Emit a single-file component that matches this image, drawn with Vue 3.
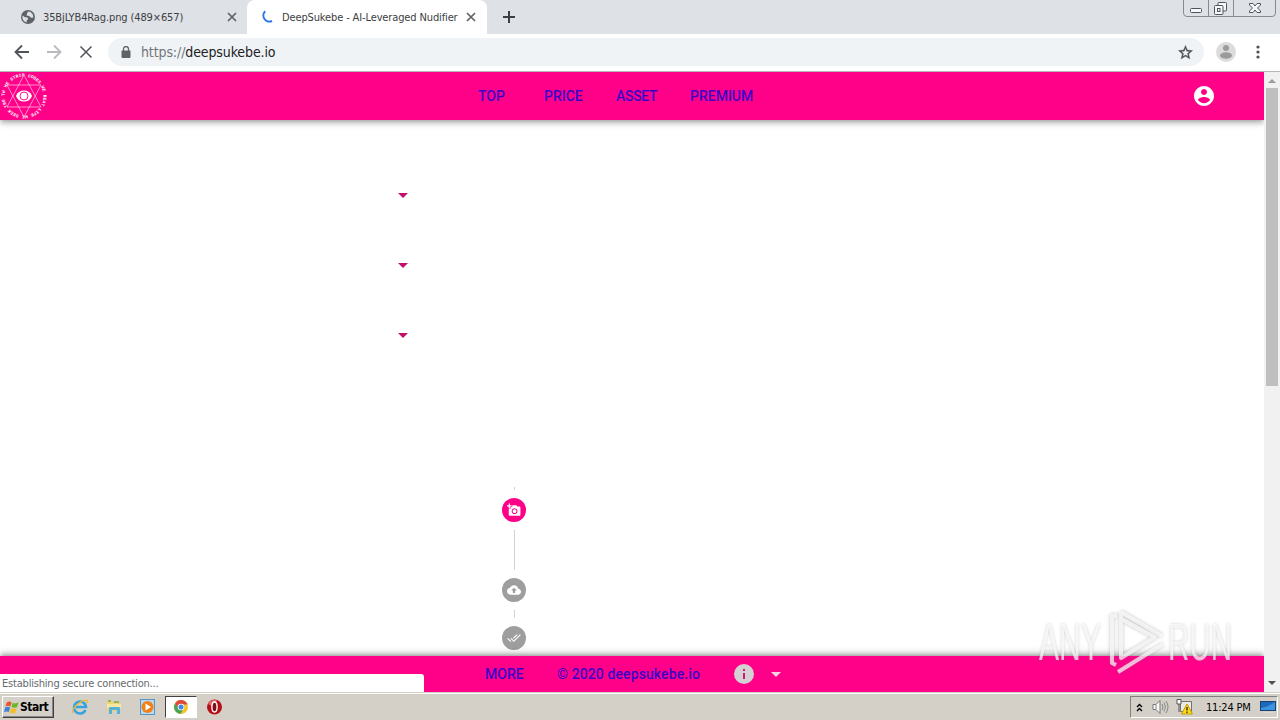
<template>
  <div class="screen">
    <div class="tab-strip">
      <div class="tab">
        <svg class="globe" viewBox="0 0 14 14">
          <circle cx="7" cy="7" r="7" fill="#5f6368" />
          <path d="M1.5 5.5L4 7.2 6.7 7.5 7 9.5 5.6 10.3 5.7 12.5Q2 11.5 1.5 8zM7 1.5L9.5 2 11.8 4.5 12.4 7.5 10 7.8 8.2 6 5.5 5.5 6 3.8z" fill="#dee1e6" />
        </svg>
        <span class="tab-title first-title">35BjLYB4Rag.png (489×657)</span>
        <svg class="close" viewBox="0 0 10 10"><path d="M1 1L9 9M9 1L1 9" /></svg>
      </div>
      <div class="tab active">
        <svg class="spinner" viewBox="0 0 14 14">
          <path d="M5.2 1.3A6 6 0 0 0 12 11" fill="none" stroke="#2874e8" stroke-width="2" />
        </svg>
        <span class="tab-title second-title">DeepSukebe - AI-Leveraged Nudifier</span>
        <svg class="close" viewBox="0 0 10 10"><path d="M1 1L9 9M9 1L1 9" /></svg>
      </div>
      <svg class="new-tab" viewBox="0 0 12 12"><path d="M6 0V12M0 6H12" /></svg>
      <svg class="window-buttons" viewBox="0 0 94 18">
        <path d="M.5 0V13Q.5 16.500 4 16.500H89Q92.500 16.500 92.500 13V0M25.500 0V16M50.500 0V16" fill="none" stroke="#858a94" />
        <g fill="#f7f8fa" stroke="#50545c">
          <rect x="7.500" y="8.500" width="11" height="4" rx="1" />
          <rect x="35" y="2.500" width="8.500" height="8.500" rx="1" />
          <rect x="31.500" y="5.500" width="8.500" height="9" rx="1" />
          <rect x="34.500" y="8.500" width="2.500" height="3" />
          <path d="M66.500 3.500H70L72 6 74 3.500H77.500V5L74.500 8 77.500 11V12.500H74L72 10 70 12.500H66.500V11L69.500 8 66.500 5z" />
        </g>
      </svg>
    </div>

    <div class="toolbar">
      <svg class="nav-icon" viewBox="0 0 16 16"><path d="M15 8H2M8 1.500L1.500 8 8 14.500" /></svg>
      <svg class="nav-icon disabled" viewBox="0 0 16 16"><path d="M1 8H14M8 1.500L14.500 8 8 14.500" /></svg>
      <svg class="nav-icon stop" viewBox="0 0 16 16"><path d="M2.500 2.500L13.500 13.500M13.500 2.500L2.500 13.500" /></svg>
      <div class="address">
        <svg class="lock" viewBox="0 0 10 12">
          <path d="M1 4.500H9Q9.500 4.500 9.500 5V11Q9.500 12 8.500 12H1.500Q.5 12 .5 11V5Q.5 4.500 1 4.500z" fill="#5f6368" />
          <path d="M2.500 5V3A2.500 2.500 0 0 1 7.500 3V5" fill="none" stroke="#5f6368" stroke-width="1.300" />
        </svg>
        <span class="url"><span class="scheme">https://</span>deepsukebe.io</span>
        <svg class="star" viewBox="0 0 24 24">
          <path d="M22 9.240l-7.190-.62L12 2 9.190 8.630 2 9.240l5.460 4.730L5.820 21 12 17.270 18.180 21l-1.630-7.030L22 9.240zM12 15.400l-3.760 2.270 1-4.280-3.320-2.880 4.380-.38L12 6.100l1.710 4.040 4.380.38-3.320 2.880 1 4.280L12 15.400z" fill="#4d5156" stroke="#4d5156" stroke-width=".5" />
        </svg>
      </div>
      <svg class="profile" viewBox="0 0 20 20">
        <circle cx="10" cy="10" r="10" fill="#dcdcdc" />
        <circle cx="10" cy="6" r="3" fill="#9b9b9b" />
        <ellipse cx="10" cy="13.500" rx="6" ry="3.200" fill="#9b9b9b" />
      </svg>
      <svg class="menu" viewBox="0 0 4 14" fill="#4d5156">
        <circle cx="2" cy="2" r="1.600" /><circle cx="2" cy="7" r="1.600" /><circle cx="2" cy="12" r="1.600" />
      </svg>
    </div>

    <div class="viewport">
      <div class="page">
        <header class="app-bar">
          <svg class="logo" viewBox="0 0 48 48">
            <defs><path id="ring" d="M4.500 24A19.500 19.500 0 1 1 4.500 24.100" /></defs>
            <text class="ring-text" textLength="119"><textPath href="#ring" textLength="119">TH WE STRIP CODES WE BEAT LIFE WE SEEK TRU</textPath></text>
            <path d="M24 3L41 35H7zM24 45L7 13H41z" fill="none" stroke="#ffb5dc" stroke-width=".8" />
            <path d="M16 24Q18 18.500 24 18.500T32 24Q30 29.500 24 29.500T16 24z" fill="#fff" />
            <circle cx="24" cy="24" r="4" fill="#fff" stroke="#ff0088" stroke-width=".9" />
          </svg>
          <nav class="links">
            <a v-for="link in links" :key="link" :class="link.toLowerCase()">{{ link }}</a>
          </nav>
          <svg class="account" viewBox="0 0 24 24">
            <path d="M12 2C6.480 2 2 6.480 2 12s4.480 10 10 10 10-4.480 10-10S17.520 2 12 2zm0 3c1.660 0 3 1.340 3 3s-1.340 3-3 3-3-1.340-3-3 1.340-3 3-3zm0 14.200c-2.500 0-4.710-1.280-6-3.220.03-1.990 4-3.080 6-3.080 1.990 0 5.970 1.090 6 3.080-1.290 1.940-3.500 3.220-6 3.220z" fill="#fff" />
          </svg>
        </header>

        <main class="content">
          <div class="selects">
            <i v-for="n in 3" :key="n" class="caret"></i>
          </div>
          <div class="stepper">
            <span class="line short"></span>
            <div class="step current">
              <svg viewBox="0 0 24 24"><path d="M3 4V1h2v3h3v2H5v3H3V6H0V4h3zm3 6V7h3V4h7l1.830 2H21c1.100 0 2 .9 2 2v12c0 1.100-.9 2-2 2H5c-1.100 0-2-.9-2-2V10h3zm7 9c2.760 0 5-2.240 5-5s-2.240-5-5-5-5 2.240-5 5 2.240 5 5 5zm-3.200-5c0 1.770 1.430 3.200 3.200 3.200s3.200-1.430 3.200-3.200-1.430-3.200-3.200-3.200-3.200 1.430-3.200 3.200z" /></svg>
            </div>
            <span class="line long"></span>
            <div class="step">
              <svg viewBox="0 0 24 24"><path d="M19.350 10.040C18.670 6.590 15.640 4 12 4 9.110 4 6.600 5.640 5.350 8.040 2.340 8.360 0 10.910 0 14c0 3.310 2.690 6 6 6h13c2.760 0 5-2.240 5-5 0-2.640-2.050-4.780-4.650-4.960zM14 13v4h-4v-4H7l5-5 5 5h-3z" /></svg>
            </div>
            <span class="line mid"></span>
            <div class="step">
              <svg viewBox="0 0 24 24"><path d="M18 7l-1.410-1.410-6.340 6.340 1.410 1.410L18 7zm4.240-1.410L11.660 16.170 7.480 12l-1.410 1.410L11.660 19l12-12-1.420-1.410zM.41 13.410L6 19l1.410-1.410L1.830 12 .41 13.410z" /></svg>
            </div>
          </div>
        </main>

        <footer class="foot-bar">
          <a class="more">MORE</a>
          <a class="copyright">© 2020 deepsukebe.io</a>
          <svg class="info" viewBox="0 0 20 20">
            <circle cx="10" cy="10" r="10" fill="#d5d0d3" />
            <path d="M9 5H11V7H9zM9 9H11V15H9z" fill="#cf1970" />
          </svg>
          <i class="caret light"></i>
        </footer>
      </div>

      <div class="scrollbar">
        <i class="arrow up"></i>
        <div class="thumb"></div>
        <i class="arrow down"></i>
      </div>

      <div class="status"><span>Establishing secure connection...</span></div>

      <svg class="watermark" viewBox="0 0 204 80">
        <g v-for="layer in ['mark-shade', 'mark']" :key="layer" :class="layer">
          <text x="5" y="54" textLength="62" lengthAdjust="spacingAndGlyphs">ANY</text>
          <text x="134" y="54" textLength="64" lengthAdjust="spacingAndGlyphs">RUN</text>
          <path d="M83 10H78V57L82 59M87 6L128 30M87 6V52L121 31L87 13M84 66L129 38" />
        </g>
      </svg>
    </div>

    <div class="taskbar">
      <div class="start">
        <svg viewBox="0 0 16 16">
          <path d="M3 3Q6 1 8 3L6.800 7.500Q4 6 1.500 7.500z" fill="#e8562d" />
          <path d="M9 3.500Q12 5 15.500 3L14 8Q11 9.500 8 8z" fill="#6fb52c" />
          <path d="M1.200 8.500Q4 7 6.500 8.500L5 13.500Q3 12 0 13.500z" fill="#3e83d5" />
          <path d="M7.500 9Q10 10.500 13.500 9L12 14Q9 15.500 6.200 14z" fill="#f6bd25" />
        </svg>
        <b>Start</b>
      </div>
      <div class="launchers">
        <svg viewBox="0 0 18 18">
          <path d="M14.500 12A6 6 0 1 1 15 9H5" fill="none" stroke="#36a3df" stroke-width="2.600" />
          <path d="M2 15C-1 12 10 1 16 2.500 17 3 16.500 4.500 16 5" fill="none" stroke="#ecb936" stroke-width="1.300" />
        </svg>
        <svg viewBox="0 0 18 18">
          <path d="M2 3H7L8 5H15V13H2z" fill="#efd36c" />
          <path d="M3 2H6V4H3zM9 3H14V5H9z" fill="#91b65b" />
          <path d="M2 6H16V10H2z" fill="#f9e9a0" />
          <path d="M4 16V10Q4 9 5 9H14Q15 9 15 10V16H12V12H7V16z" fill="#58b2d8" />
        </svg>
        <svg viewBox="0 0 18 18">
          <rect x="1.500" y="1.500" width="14" height="15" fill="#b7d9f1" stroke="#5995c7" />
          <circle cx="8.500" cy="9" r="6" fill="#f18117" />
          <path d="M6.500 5.500L12 9 6.500 12.500z" fill="#fff" />
        </svg>
        <div class="running">
          <svg viewBox="0 0 14 14">
            <circle cx="7" cy="7" r="7" fill="#f2c52b" />
            <path d="M1 3.500A7 7 0 0 1 13.500 4.500H7L4.500 8.500z" fill="#df4939" />
            <path d="M1 3.500A7 7 0 0 0 6.500 14L9.500 8.500 4.500 8.500z" fill="#45a457" />
            <circle cx="7" cy="7" r="3.300" fill="#fff" />
            <circle cx="7" cy="7" r="2.500" fill="#4285e8" />
          </svg>
        </div>
        <svg viewBox="0 0 18 18">
          <circle cx="8.500" cy="9" r="7.500" fill="#b80f17" />
          <path d="M2 6Q5 1 11 2L8 9z" fill="#df6567" />
          <ellipse cx="8.500" cy="9" rx="2.600" ry="5" fill="#801016" stroke="#fff" stroke-width="1.400" />
        </svg>
      </div>
      <div class="tray">
        <svg class="chevrons" viewBox="0 0 7 9"><path d="M1 4L3.500 1.500 6 4M1 8L3.500 5.500 6 8" fill="none" stroke="#000" stroke-width="1.400" /></svg>
        <svg class="speaker" viewBox="0 0 17 16">
          <path d="M1 5.500H4L8 1.500V14.500L4 10.500H1z" fill="#f8f8f8" stroke="#777" />
          <path d="M4 5.500V10.500M10 5Q12 8 10 11M12 3.500Q15 8 12 12.500M14 2Q18 8 14 14" fill="none" stroke="#888" />
        </svg>
        <svg class="network" viewBox="0 0 17 16">
          <path d="M5 2.500H15.500V12.500H4.500V5" fill="#e9e9e5" stroke="#77736c" />
          <path d="M1 .5H5V5H1zM3 5V13" fill="#fff" stroke="#555" />
          <path d="M11 5L16.500 15H5.500z" fill="#ffdc17" stroke="#c59b09" />
          <path d="M11 8V11.500M11 12.500V14" stroke="#322" stroke-width="1.300" />
        </svg>
        <span class="clock">11:24 PM</span>
        <svg class="desktop" viewBox="0 0 16 14">
          <rect x=".5" y="1.500" width="15" height="9" fill="#1f69bc" stroke="#174274" />
          <path d="M1 8Q8 7 15 2V10H1z" fill="#3e94df" />
          <path d="M3 12H13V13H3z" fill="#ded9ce" />
        </svg>
      </div>
    </div>
  </div>
</template>

<script setup>
const links = ["TOP", "PRICE", "ASSET", "PREMIUM"];
</script>

<style>
body {
  overflow: hidden;
}
</style>

<style scoped>
.screen {
  width: 1280px;
  height: 720px;
  display: flex;
  flex-direction: column;
  overflow: hidden;
  background: #fff;
  font-family: "DejaVu Sans Condensed", "DejaVu Sans", sans-serif;
}
.screen * {
  box-sizing: border-box;
}
svg {
  display: block;
  flex: none;
}
.tab-strip {
  height: 34px;
  display: flex;
  align-items: flex-start;
  background: #dee1e6;
}
.tab {
  width: 247px;
  height: 34px;
  display: flex;
  align-items: center;
  padding-left: 21px;
}
.tab.active {
  width: 240px;
  padding-left: 13px;
  background: #fff;
  border-radius: 8px 8px 0 0;
}
.globe,
.spinner {
  width: 14px;
  height: 14px;
}
.tab-title {
  margin-left: 8px;
  font-size: 11px;
  color: #3c4043;
  white-space: nowrap;
}
.first-title {
  width: 184px;
  letter-spacing: -0.12px;
}
.second-title {
  width: 184px;
  letter-spacing: -0.13px;
}
.close {
  width: 10px;
  height: 10px;
  fill: none;
  stroke: #5f6368;
  stroke-width: 1.7;
}
.new-tab {
  width: 12px;
  height: 12px;
  margin: 11px 0 0 16px;
  stroke: #3c4043;
  stroke-width: 2;
}
.window-buttons {
  width: 94px;
  height: 18px;
  margin-left: auto;
  margin-right: 3px;
}
.toolbar {
  height: 38px;
  display: flex;
  align-items: center;
  padding-left: 14px;
  padding-bottom: 1px;
  border-bottom: 1px solid #b7b7ba;
}
.nav-icon {
  width: 16px;
  height: 16px;
  margin-right: 16px;
  fill: none;
  stroke: #505458;
  stroke-width: 1.8;
}
.nav-icon.disabled {
  stroke: #b8babd;
}
.nav-icon.stop {
  margin-right: 14px;
  stroke-width: 1.5;
}
.address {
  width: 1096px;
  height: 28px;
  display: flex;
  align-items: center;
  padding: 0 10px 0 13px;
  border-radius: 14px;
  background: #f0f3f6;
}
.lock {
  width: 10px;
  height: 12px;
}
.url {
  margin-left: 10px;
  font-size: 14px;
  letter-spacing: -0.11px;
  color: #202124;
}
.scheme {
  color: #71767b;
}
.star {
  width: 17px;
  height: 17px;
  margin-left: auto;
}
.profile {
  width: 20px;
  height: 20px;
  margin-left: 12px;
}
.menu {
  width: 4px;
  height: 14px;
  margin-left: 20px;
}
.viewport {
  position: relative;
  height: 620px;
  display: flex;
}
.page {
  width: 1264px;
  display: flex;
  flex-direction: column;
  overflow: hidden;
}
.app-bar {
  z-index: 1;
  height: 48px;
  display: flex;
  align-items: center;
  background: #ff0088;
  box-shadow: 0 2px 4px -1px rgba(0, 0, 0, 0.2), 0 4px 5px rgba(0, 0, 0, 0.14),
    0 1px 10px rgba(0, 0, 0, 0.12);
}
.logo {
  width: 48px;
  height: 48px;
}
.ring-text {
  font: bold 4.5px "Liberation Mono", monospace;
  fill: #fff;
}
.links {
  display: flex;
  margin-left: 430px;
}
.links a,
.foot-bar a {
  font: 500 14px/20px Roboto, sans-serif;
  color: #3900c9;
  white-space: nowrap;
}
.top {
  width: 66px;
}
.price {
  width: 72px;
}
.links .asset {
  width: 74px;
  letter-spacing: -0.3px;
}
.account {
  width: 24px;
  height: 24px;
  margin-left: auto;
  margin-right: 48px;
}
.content {
  height: 536px;
  display: flex;
  background: #fff;
}
.selects {
  width: 502px;
  display: flex;
  flex-direction: column;
  gap: 65px;
  padding: 73px 0 0 398px;
}
.caret {
  width: 0;
  height: 0;
  border: 5px solid transparent;
  border-top-color: #c1106b;
  border-bottom: 0;
}
.stepper {
  width: 24px;
  display: flex;
  flex-direction: column;
  align-items: center;
  padding-top: 367px;
}
.line {
  width: 1px;
  margin: 8px 0;
  background: #d2d2d2;
}
.short {
  height: 3px;
  margin-top: 0;
}
.long {
  height: 40px;
}
.mid {
  height: 8px;
}
.step {
  width: 24px;
  height: 24px;
  display: flex;
  flex: none;
  align-items: center;
  justify-content: center;
  border-radius: 50%;
  background: #9e9e9e;
}
.step.current {
  background: #ff0088;
}
.step svg {
  width: 14px;
  height: 14px;
  fill: #fff;
}
.foot-bar {
  z-index: 1;
  height: 36px;
  display: flex;
  align-items: center;
  padding-left: 485px;
  background: #ff0088;
  box-shadow: 0 -2px 4px -1px rgba(0, 0, 0, 0.3), 0 -4px 6px rgba(0, 0, 0, 0.16);
}
.more {
  width: 72px;
}
.foot-bar .copyright {
  width: 177px;
  letter-spacing: 0.1px;
}
.info {
  width: 20px;
  height: 20px;
  margin-right: 17px;
}
.caret.light {
  border-top-color: #f0d2e2;
}
.scrollbar {
  width: 16px;
  display: flex;
  flex-direction: column;
  align-items: center;
  background: #f1f1f1;
}
.arrow {
  border: 4px solid transparent;
}
.up {
  margin-top: 7px;
  border-top: 0;
  border-bottom-color: #9a9a9a;
}
.down {
  margin: auto 0 7px;
  border-bottom: 0;
  border-top-color: #505050;
}
.thumb {
  width: 12px;
  height: 298px;
  margin-top: 5px;
  background: #bfbfbf;
}
.status {
  position: absolute;
  z-index: 2;
  left: 0;
  bottom: 0;
  width: 424px;
  height: 18px;
  padding-left: 2px;
  border-radius: 0 3px 0 0;
  background: #fff;
  font-size: 11px;
  line-height: 19px;
  letter-spacing: -0.2px;
  color: #66696e;
}
.watermark {
  position: absolute;
  z-index: 3;
  left: 1034px;
  top: 534px;
  width: 204px;
  height: 80px;
  overflow: visible;
}
.watermark text {
  font: 51px "Liberation Sans", sans-serif;
}
.watermark path {
  fill: none;
  stroke-width: 4;
  stroke-linejoin: round;
}
.mark {
  opacity: 0.7;
}
.mark text {
  fill: #fff;
}
.mark path {
  stroke: #fff;
}
.mark-shade {
  opacity: 0.33;
  filter: blur(1.5px);
}
.mark-shade text {
  fill: #777;
}
.mark-shade path {
  stroke: #777;
  stroke-width: 5;
}
.taskbar {
  height: 28px;
  display: flex;
  align-items: center;
  padding: 2px 2px 1px;
  border-top: 1px solid #d4d0c8;
  box-shadow: inset 0 1px #fff;
  background: #d4d0c8;
}
.start {
  width: 52px;
  height: 22px;
  display: flex;
  align-items: center;
  gap: 1px;
  padding-left: 1px;
  border: 1px solid;
  border-color: #fff #404040 #404040 #fff;
  box-shadow: inset -1px -1px #888;
  font-size: 12px;
  letter-spacing: -0.5px;
}
.start svg {
  width: 15px;
  height: 16px;
}
.launchers {
  display: flex;
  align-items: center;
  gap: 16px;
  margin-left: 17px;
}
.launchers > svg {
  width: 18px;
  height: 18px;
}
.running {
  width: 32px;
  height: 22px;
  display: flex;
  align-items: center;
  justify-content: center;
  margin: 0 -7px 0 -8px;
  border: 1px solid;
  border-color: #404040 #fff #fff #404040;
  background: #fff;
}
.running svg {
  width: 14px;
  height: 14px;
}
.tray {
  width: 148px;
  height: 22px;
  display: flex;
  align-items: center;
  margin-left: auto;
  padding-left: 5px;
  border: 1px solid;
  border-color: #808080 #fff #fff #808080;
}
.chevrons {
  width: 7px;
  height: 9px;
}
.speaker {
  width: 17px;
  height: 16px;
  margin-left: 9px;
}
.network {
  width: 17px;
  height: 16px;
  margin-left: 7px;
}
.clock {
  width: 54px;
  margin-left: 13px;
  font-size: 11px;
  letter-spacing: -0.2px;
  white-space: nowrap;
}
.desktop {
  width: 16px;
  height: 14px;
}
</style>
